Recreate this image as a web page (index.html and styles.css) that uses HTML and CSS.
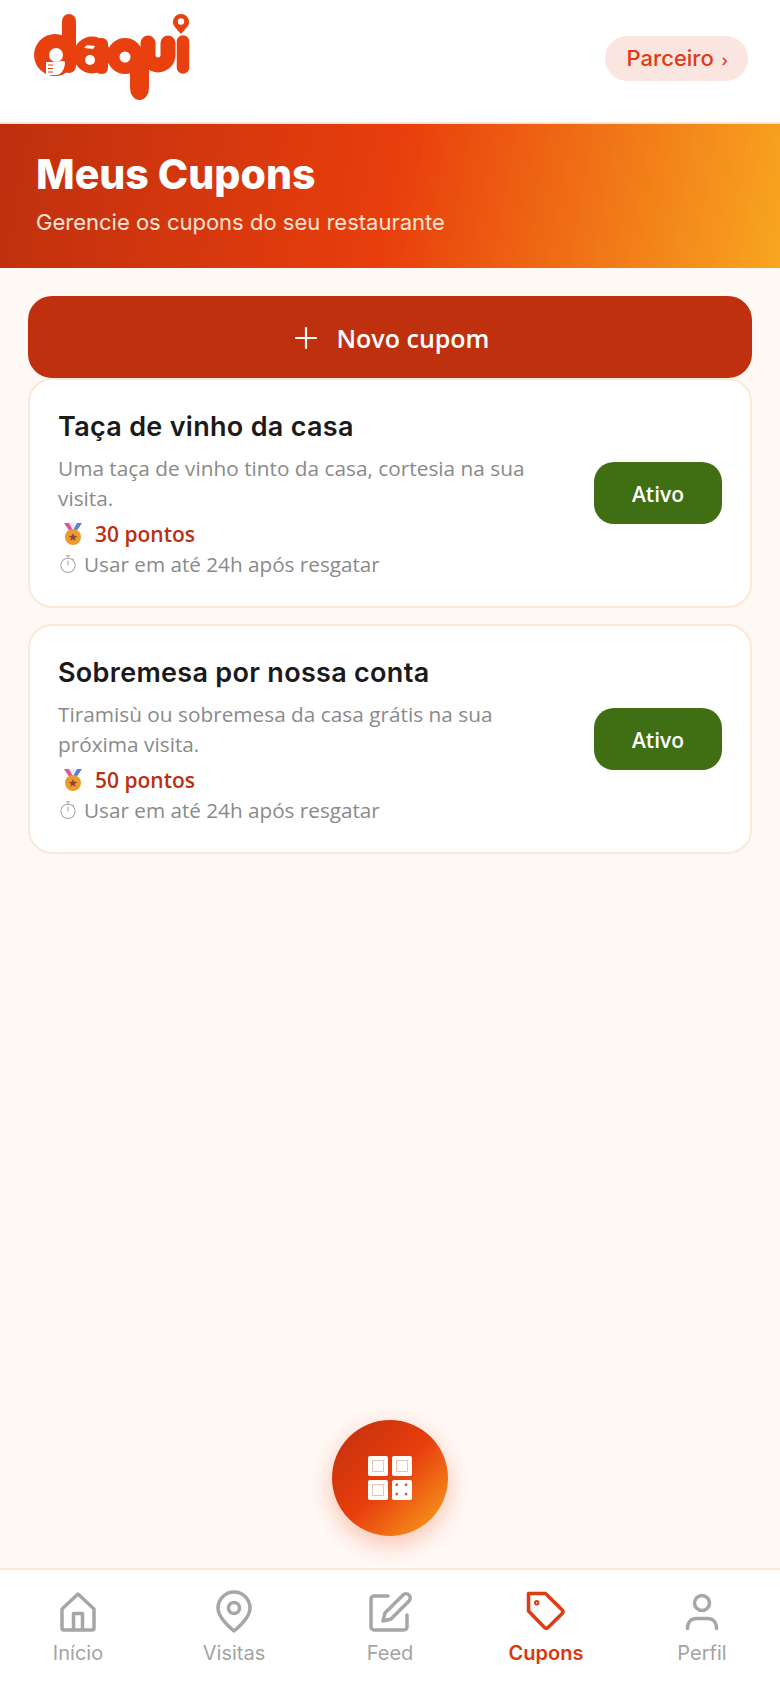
FILE: index.html
```html
<!DOCTYPE html>
<html lang="pt-BR">
<head>
  <meta charset="UTF-8">
  <meta name="viewport" content="width=device-width, initial-scale=1">
  <title>Meus Cupons</title>
  <link rel="stylesheet" href="styles.css">
</head>
<body>
  <div class="app">
    <header class="topbar">
      <svg class="logo" viewBox="0 0 200 110" role="img" aria-label="daqui">
        <g class="logo-ink">
          <circle cx="55" cy="55" r="21"/>
          <line x1="69" y1="21" x2="69" y2="66" class="logo-stem"/>
          <circle cx="92" cy="55" r="18.500"/>
          <rect x="95" y="38" width="13" height="36" rx="6"/>
          <circle cx="125" cy="56" r="18"/>
          <path d="M130 60h19v28a9.500 12 0 0 1-19 0z"/>
          <path d="M148 43v12a10 10 0 0 0 20 0V43" class="logo-u"/>
          <line x1="183" y1="41.500" x2="183" y2="67.500" class="logo-stem logo-i"/>
          <path d="M181 34c-5-6-8-8-8-12a8 8 0 0 1 16 0c0 4-3 6-8 12z"/>
        </g>
        <g class="logo-cut">
          <circle cx="181" cy="21.500" r="3.200"/>
          <circle cx="125" cy="57" r="5.500"/>
          <circle cx="90" cy="60" r="5"/>
          <path d="M84 48l9 1 2-3-8-1z"/>
          <circle cx="56" cy="55" r="7"/>
          <path d="M46 75v-13h8c4 0 9-2 11 0 0 6-3 13-9 13z"/>
        </g>
        <path class="logo-list" d="M48 65h5M48 68.500h5M48 72h5"/>
      </svg>
      <button class="partner-btn">Parceiro <span class="partner-arrow">›</span></button>
    </header>

    <section class="hero">
      <h1>Meus Cupons</h1>
      <p>Gerencie os cupons do seu restaurante</p>
    </section>

    <main class="content">
      <button class="new-btn">
        <svg viewBox="0 0 24 24" width="26" height="26"><path d="M12 2v20M2 12h20"/></svg>
        Novo cupom
      </button>

      <div class="coupon-list">
        <article class="coupon">
          <div class="coupon-info">
            <h2>Taça de vinho da casa</h2>
            <p class="coupon-desc">Uma taça de vinho tinto da casa, cortesia na sua visita.</p>
            <div class="coupon-points">
              <svg class="medal" viewBox="0 0 24 24" width="24" height="24">
                <path d="M3 1h5l5 9H9z" fill="#e0559a"/>
                <path d="M21 1h-5l-5 9h4z" fill="#5c7fd6"/>
                <path d="M8.500 1h7L12 7z" fill="#f3e9ee"/>
                <circle cx="12" cy="15" r="8" fill="#ef9a2e"/>
                <path d="M12 11l1.200 2.700 2.900.3-2.200 1.900.7 2.900-2.600-1.500-2.600 1.500.7-2.900L7.900 14l2.900-.3z" fill="#8a4a32"/>
              </svg>
              30 pontos
            </div>
            <div class="coupon-limit">
              <svg class="watch" viewBox="0 0 24 24" width="20" height="20">
                <circle cx="12" cy="13.500" r="8.500"/>
                <path d="M9.500 2h5M12 2v3M12 13.500V8M19 5.500l-1.500 1.500"/>
              </svg>
              Usar em até 24h após resgatar
            </div>
          </div>
          <span class="status">Ativo</span>
        </article>

        <article class="coupon">
          <div class="coupon-info">
            <h2>Sobremesa por nossa conta</h2>
            <p class="coupon-desc">Tiramisù ou sobremesa da casa grátis na sua próxima visita.</p>
            <div class="coupon-points">
              <svg class="medal" viewBox="0 0 24 24" width="24" height="24">
                <path d="M3 1h5l5 9H9z" fill="#e0559a"/>
                <path d="M21 1h-5l-5 9h4z" fill="#5c7fd6"/>
                <path d="M8.500 1h7L12 7z" fill="#f3e9ee"/>
                <circle cx="12" cy="15" r="8" fill="#ef9a2e"/>
                <path d="M12 11l1.200 2.700 2.900.3-2.200 1.900.7 2.900-2.600-1.500-2.600 1.500.7-2.900L7.900 14l2.900-.3z" fill="#8a4a32"/>
              </svg>
              50 pontos
            </div>
            <div class="coupon-limit">
              <svg class="watch" viewBox="0 0 24 24" width="20" height="20">
                <circle cx="12" cy="13.500" r="8.500"/>
                <path d="M9.500 2h5M12 2v3M12 13.500V8M19 5.500l-1.500 1.500"/>
              </svg>
              Usar em até 24h após resgatar
            </div>
          </div>
          <span class="status">Ativo</span>
        </article>
      </div>
    </main>

    <button class="qr-btn" aria-label="QR code">
      <svg viewBox="0 0 44 44" width="44" height="44">
        <rect x="0" y="0" width="20" height="20" rx="2" fill="#fff"/>
        <rect x="24" y="0" width="20" height="20" rx="2" fill="#fff"/>
        <rect x="0" y="24" width="20" height="20" rx="2" fill="#fff"/>
        <rect x="24" y="24" width="20" height="20" rx="2" fill="#fff"/>
        <g fill="none" stroke="#f3b3a0" stroke-width="0.8">
          <rect x="4.500" y="4.500" width="11" height="11"/>
          <rect x="28.500" y="4.500" width="11" height="11"/>
          <rect x="4.500" y="28.500" width="11" height="11"/>
        </g>
        <g fill="#d0603f">
          <rect x="27.500" y="27.500" width="2.500" height="2.500"/>
          <rect x="36.800" y="27.500" width="2.500" height="2.500"/>
          <rect x="27.500" y="36.800" width="2.500" height="2.500"/>
          <rect x="36.800" y="36.800" width="2.500" height="2.500"/>
        </g>
      </svg>
    </button>

    <nav class="bottom-nav">
      <a class="nav-item">
        <svg viewBox="0 0 44 44"><path d="M6 19 22 4l16 15v19a2 2 0 0 1-2 2H8a2 2 0 0 1-2-2z"/><path d="M17.500 40V23.500h9V40"/></svg>
        <span>Início</span>
      </a>
      <a class="nav-item">
        <svg viewBox="0 0 44 44"><path d="M22 41C10 31 6 24 6 18a16 16 0 0 1 32 0c0 6-4 13-16 23z"/><circle cx="22" cy="18" r="5.500"/></svg>
        <span>Visitas</span>
      </a>
      <a class="nav-item">
        <svg viewBox="0 0 44 44"><path d="M20 6H6a3 3 0 0 0-3 3v28a3 3 0 0 0 3 3h30a3 3 0 0 0 3-3V25"/><path d="M35 5a4 4 0 0 1 6 6L23 29l-8 2 2-8z"/></svg>
        <span>Feed</span>
      </a>
      <a class="nav-item nav-item-active">
        <svg viewBox="0 0 44 44"><path d="M4.500 3.500h17l16.700 16.500a2.500 2.500 0 0 1 0 3.500L24 37.500a2.500 2.500 0 0 1-3.500 0L4.500 21z"/><circle cx="12.700" cy="12.700" r="1"/></svg>
        <span>Cupons</span>
      </a>
      <a class="nav-item">
        <svg viewBox="0 0 44 44"><circle cx="22" cy="13" r="7.500"/><path d="M7.500 38.500c0-6 3.500-10 9-10h11c5.500 0 9 4 9 10"/></svg>
        <span>Perfil</span>
      </a>
    </nav>
  </div>
</body>
</html>
```

FILE: styles.css
```css
* {
  box-sizing: border-box;
}

body {
  margin: 0;
  font-family: 'Inter', sans-serif;
  background: #fff9f5;
}

.app {
  position: relative;
  display: flex;
  flex-direction: column;
  min-height: 100vh;
}

.topbar {
  display: flex;
  align-items: center;
  justify-content: space-between;
  height: 124px;
  padding: 0 32px 6px 0;
  background: #fff;
  border-bottom: 2px solid #fbe6d6;
}

.logo {
  width: 200px;
  height: 110px;
  margin-bottom: 6px;
}

.logo-ink {
  fill: #e8400f;
  stroke: none;
}

.logo-stem {
  stroke: #e8400f;
  stroke-width: 14;
  stroke-linecap: round;
}

.logo-i {
  stroke-width: 12.500;
}

.logo-u {
  fill: none;
  stroke: #e8400f;
  stroke-width: 15;
  stroke-linecap: round;
}

.logo-cut {
  fill: #fff;
}

.logo-list {
  fill: none;
  stroke: #e8400f;
  stroke-width: 1;
}

.partner-btn {
  height: 45px;
  padding: 0 20px 0 22px;
  background: #fbe5e0;
  color: #e03b12;
  border: none;
  border-radius: 23px;
  font-family: 'Inter', sans-serif;
  font-size: 22px;
  font-weight: 500;
}

.partner-arrow {
  font-size: 16px;
  margin-left: 2px;
}

.hero {
  height: 144px;
  padding: 26px 36px 0;
  background: linear-gradient(100deg, #bf300f 0%, #e83e0c 50%, #f8a620 100%);
}

.hero h1 {
  margin: 0;
  color: #fff;
  font-size: 41px;
  line-height: 48px;
  font-weight: 800;
}

.hero p {
  margin: 10px 0 0;
  color: #fde3d6;
  font-size: 22px;
  line-height: 28px;
}

.content {
  flex: 1;
  padding: 28px 28px 0;
}

.new-btn {
  display: flex;
  align-items: center;
  justify-content: center;
  gap: 18px;
  width: 100%;
  height: 82px;
  padding: 2px 0 0 2px;
  background: #bf300f;
  color: #fff;
  border: none;
  border-radius: 24px;
  font-family: 'Open Sans', sans-serif;
  font-size: 25px;
  font-weight: 600;
}

.new-btn svg {
  fill: none;
  stroke: #fff;
  stroke-width: 2;
}

.coupon-list {
  display: flex;
  flex-direction: column;
  gap: 16px;
}

.coupon {
  display: flex;
  align-items: center;
  justify-content: space-between;
  height: 230px;
  padding: 2px 28px 0;
  background: #fff;
  border: 2px solid #fae8d8;
  border-radius: 24px;
}

.coupon-info {
  width: 474px;
}

.coupon h2 {
  margin: 0 0 8px;
  color: #1a1a1a;
  font-size: 27px;
  line-height: 36px;
  font-weight: 600;
  letter-spacing: 0.3px;
}

.coupon-desc {
  margin: 0;
  color: #8a8a8a;
  font-family: 'Open Sans', sans-serif;
  font-size: 20.800px;
  line-height: 30px;
}

.coupon-points {
  display: flex;
  align-items: center;
  gap: 10px;
  margin-top: 6px;
  color: #b8300f;
  font-family: 'Open Sans', sans-serif;
  font-size: 21px;
  font-weight: 600;
  line-height: 30px;
}

.medal {
  margin-left: 3px;
}

.coupon-limit {
  display: flex;
  align-items: center;
  gap: 6px;
  color: #8a8a8a;
  font-family: 'Open Sans', sans-serif;
  font-size: 20.700px;
  line-height: 30px;
}

.watch {
  fill: none;
  stroke: #a8a8a8;
  stroke-width: 1.300;
}

.status {
  display: flex;
  align-items: center;
  justify-content: center;
  width: 128px;
  height: 62px;
  margin-bottom: 2px;
  padding-top: 1px;
  background: #3f6f12;
  color: #fff;
  border-radius: 20px;
  font-family: 'Open Sans', sans-serif;
  font-size: 21px;
  font-weight: 600;
}

.qr-btn {
  position: absolute;
  left: 332px;
  top: 1420px;
  display: flex;
  align-items: center;
  justify-content: center;
  width: 116px;
  height: 116px;
  padding: 0;
  border: none;
  border-radius: 50%;
  background: linear-gradient(135deg, #bf300f 0%, #e83e0c 50%, #f8a620 100%);
  box-shadow: 0 8px 24px rgba(232, 62, 12, 0.3);
}

.bottom-nav {
  display: grid;
  grid-template-columns: repeat(5, 1fr);
  height: 120px;
  background: #fff;
  border-top: 2px solid #fae8d8;
}

.nav-item {
  display: flex;
  flex-direction: column;
  align-items: center;
  padding-top: 20px;
  color: #a3a3a3;
  font-size: 20px;
  line-height: 28px;
}

.nav-item svg {
  width: 44px;
  height: 44px;
  margin-bottom: 5px;
  fill: none;
  stroke: #a6a6a6;
  stroke-width: 3.500;
  stroke-linejoin: round;
  stroke-linecap: round;
}

.nav-item-active {
  color: #d9380f;
  font-weight: 600;
}

.nav-item-active svg {
  stroke: #e03b12;
}
```
